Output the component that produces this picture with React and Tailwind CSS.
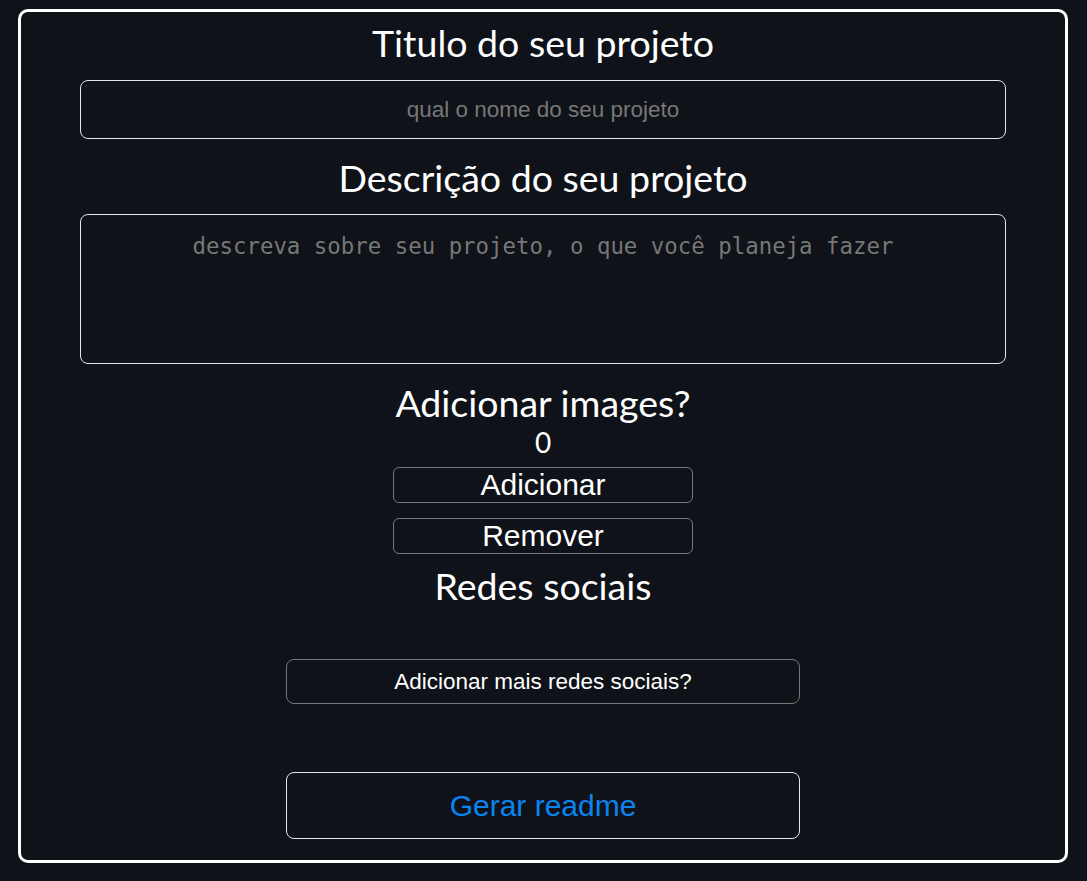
export default function App() {
  const heading = "text-[37.5px] leading-[44px] text-white font-['Lato','Noto_Sans',sans-serif]";
  return (
    <div className="min-h-screen bg-[#0f1218] pt-[9px] pl-[18px] pr-[19px] pb-[18px]">
      <div className="flex h-[854px] flex-col items-center rounded-[10px] border-[3px] border-white bg-[#0f1218] pt-[9px]">
        <h1 className={heading}>Titulo do seu projeto</h1>
        <input
          type="text"
          placeholder="qual o nome do seu projeto"
          className="mt-[15px] h-[59px] w-[926px] rounded-[8px] border border-[#e5e5e5] bg-transparent text-center font-['Liberation_Sans',Arial,sans-serif] text-[22.5px] text-white outline-none placeholder:text-[#777]"
        />
        <h2 className={`mt-[17px] ${heading}`}>Descrição do seu projeto</h2>
        <textarea
          placeholder="descreva sobre seu projeto, o que você planeja fazer"
          className="mt-[14px] h-[150px] w-[926px] resize-none rounded-[8px] border border-[#e5e5e5] bg-transparent px-3 pt-[17px] text-center font-['DejaVu_Sans_Mono',monospace] text-[22.4px] leading-[28px] text-white outline-none placeholder:text-[#777]"
        />
        <h2 className={`mt-[17px] ${heading}`}>Adicionar images?</h2>
        <p className="font-['Lato','Noto_Sans',sans-serif] text-[28px] leading-[34px] text-white">0</p>
        <button className="mt-[8px] h-[36px] w-[300px] rounded-[6px] border border-[#777] font-['Liberation_Sans',Arial,sans-serif] text-[30px] leading-[34px] text-white">
          Adicionar
        </button>
        <button className="mt-[15px] h-[36px] w-[300px] rounded-[6px] border border-[#777] font-['Liberation_Sans',Arial,sans-serif] text-[30px] leading-[34px] text-white">
          Remover
        </button>
        <h2 className={`mt-[10px] ${heading}`}>Redes sociais</h2>
        <button className="mt-[51px] h-[45px] w-[514px] rounded-[8px] border border-[#777] font-['Liberation_Sans',Arial,sans-serif] text-[22.5px] text-white">
          Adicionar mais redes sociais?
        </button>
        <button className="mt-[68px] h-[67px] w-[514px] rounded-[8px] border border-[#e5e5e5] font-['Liberation_Sans',Arial,sans-serif] text-[30px] text-[#0a84f0]">
          Gerar readme
        </button>
      </div>
    </div>
  );
}
